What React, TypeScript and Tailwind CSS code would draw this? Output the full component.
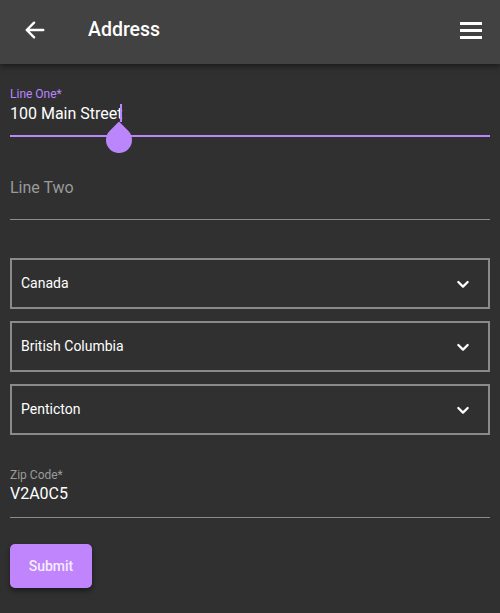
import React from "react";

const font = { fontFamily: "Roboto, 'Liberation Sans', sans-serif" };

function Chevron() {
  return (
    <svg width="16" height="16" viewBox="0 0 24 24" fill="none">
      <path d="M5 9l7 7 7-7" stroke="white" strokeWidth="3.4" strokeLinecap="round" strokeLinejoin="round" />
    </svg>
  );
}

function SelectBox({ value }: { value: string }) {
  return (
    <div className="h-[51px] border-2 border-[#8a8a8a] flex items-center justify-between pl-[9px] pr-[17px]">
      <span className="text-[14px] text-white">{value}</span>
      <Chevron />
    </div>
  );
}

export default function App() {
  return (
    <div className="w-[500px] h-[613px] bg-[#303030] overflow-hidden" style={font}>
      {/* Top bar */}
      <header className="h-16 pb-1 bg-[#424242] shadow-[0_2px_6px_rgba(0,0,0,0.5)] flex items-center pl-6 pr-[18px] relative z-10">
        <svg width="22" height="22" viewBox="0 0 24 24" fill="none">
          <path d="M21 12H3M11 4l-8 8 8 8" stroke="white" strokeWidth="2.6" strokeLinecap="round" strokeLinejoin="round" />
        </svg>
        <h1 className="ml-[42px] text-[19.5px] font-medium text-white">Address</h1>
        <div className="ml-auto flex flex-col gap-[4px]">
          <span className="block w-[22px] h-[3px] bg-white" />
          <span className="block w-[22px] h-[3px] bg-white" />
          <span className="block w-[22px] h-[3px] bg-white" />
        </div>
      </header>

      <main className="px-[10px]">
        {/* Line One (focused) */}
        <div className="pt-[23px]">
          <div className="text-[12px] leading-[14px] text-[#bb86fc]">Line One*</div>
          <div className="relative mt-[2px] h-[22px] text-[16px] leading-[22px] text-white">
            <span>100 Main Street</span>
            <span className="absolute left-[110px] top-[1px] w-[2px] h-[18px] bg-[#bb86fc]" />
            <span className="absolute left-[96px] top-[24px] w-[26px] h-[26px] rounded-full rounded-tl-none rotate-45 bg-[#bb86fc] z-10" />
          </div>
          <div className="mt-[10px] h-[2px] bg-[#bb86fc]" />
        </div>

        {/* Line Two */}
        <div className="pt-[41px]">
          <div className="text-[16px] leading-[20px] text-[#9a9a9a]">Line Two</div>
          <div className="mt-[21px] h-px bg-[#8a8a8a]" />
        </div>

        {/* Selects */}
        <div className="mt-[38px] flex flex-col gap-3">
          <SelectBox value="Canada" />
          <SelectBox value="British Columbia" />
          <SelectBox value="Penticton" />
        </div>

        {/* Zip code */}
        <div className="pt-[33px]">
          <div className="text-[12px] leading-[14px] text-[#9a9a9a]">Zip Code*</div>
          <div className="mt-[1px] text-[16px] leading-[22px] text-white">V2A0C5</div>
          <div className="mt-[12px] h-px bg-[#8a8a8a]" />
        </div>

        <button className="mt-[26px] w-[82px] h-[44px] rounded-[5px] bg-[#c084fc] text-[14px] font-medium text-[#f5ecff] shadow-[0_3px_5px_rgba(0,0,0,0.45)]">
          Submit
        </button>
      </main>
    </div>
  );
}
